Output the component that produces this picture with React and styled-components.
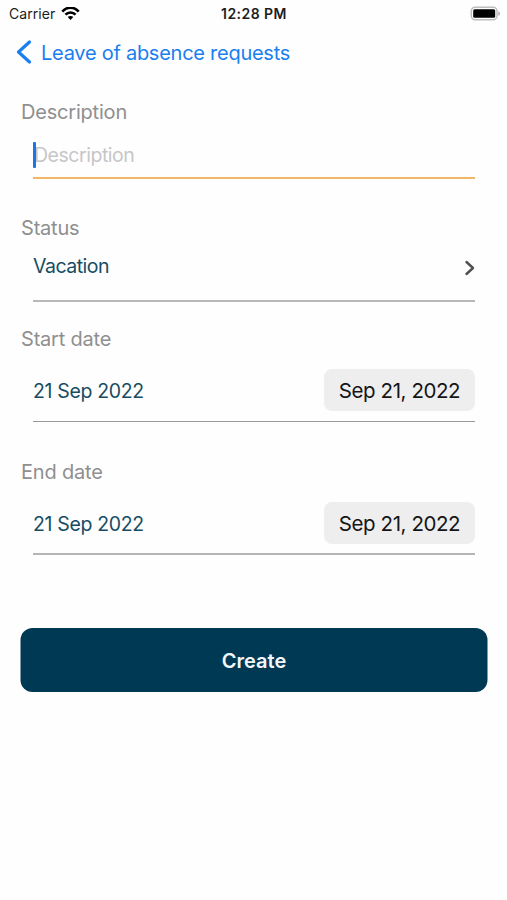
import React from "react";
import styled, { createGlobalStyle } from "styled-components";

const GlobalStyle = createGlobalStyle`
  * { box-sizing: border-box; }
  body { margin: 0; background: #fff; }
`;

const Screen = styled.main`
  width: 507px;
  height: 900px;
  display: flex;
  flex-direction: column;
  background: #fefefe;
  font-family: Inter, "Liberation Sans", sans-serif;
  font-size: 20px;
  overflow: hidden;
`;

const StatusBar = styled.header`
  height: 28px;
  display: grid;
  grid-template-columns: 1fr auto 1fr;
  align-items: center;
  padding: 0 6px 1px 9px;
  color: #1c1c1c;
`;

const Carrier = styled.div`
  display: flex;
  align-items: center;
  gap: 6px;
  font-size: 14px;
  letter-spacing: 0.05px;
`;

const Clock = styled.time`
  font-size: 14px;
  font-weight: 600;
  letter-spacing: 0.45px;
  transform: translateX(-1px);
`;

const BatterySlot = styled.div`
  display: flex;
  justify-content: flex-end;
`;

const BackLink = styled.button`
  height: 48px;
  display: flex;
  align-items: center;
  gap: 9px;
  padding: 0 0 0 16px;
  border: 0;
  background: none;
  color: #1a7fee;
  font: inherit;
  letter-spacing: -0.26px;
`;

const BackText = styled.span`
  padding-top: 1px;
`;

const Form = styled.form`
  display: flex;
  flex-direction: column;
  padding: 22px 20px 0 20px;
`;

const Field = styled.section`
  display: flex;
  flex-direction: column;
  margin-bottom: ${(p) => p.$gap}px;
`;

const Label = styled.label`
  height: 28px;
  padding-left: 1px;
  line-height: 28px;
  color: #8f8f90;
  letter-spacing: -0.2px;
`;

const Row = styled.div`
  height: ${(p) => p.$height}px;
  margin: 0 12px 0 13px;
  padding-top: ${(p) => p.$top || 0}px;
  padding-bottom: ${(p) => p.$bottom || 0}px;
  display: flex;
  align-items: center;
  justify-content: space-between;
  border-bottom: ${(p) => p.$line};
`;

const Placeholder = styled.span`
  position: relative;
  padding-left: 1px;
  color: #c6c6c8;
  font-size: 19.5px;
  letter-spacing: -0.47px;
`;

const Caret = styled.i`
  position: absolute;
  left: 0;
  top: -1px;
  width: 2.5px;
  height: 26px;
  border-radius: 1px;
  background: #1877e6;
`;

const Value = styled.span`
  padding-top: ${(p) => p.$nudge || 0}px;
  color: #174d62;
  font-size: 19.5px;
  letter-spacing: ${(p) => p.$tracking || -0.35}px;
`;

const ChevronSlot = styled.span`
  display: flex;
  padding-top: 5px;
`;

const DateChip = styled.button`
  width: 151px;
  height: 42px;
  padding: 0;
  border: 0;
  border-radius: 8px;
  background: #eeeeef;
  color: #151515;
  font: inherit;
  font-size: 20.5px;
  letter-spacing: -0.42px;
`;

const Submit = styled.button`
  height: 64px;
  width: 467px;
  padding: 1px 0 0 0;
  border: 0;
  border-radius: 12px;
  background: #003953;
  color: #f3f7f9;
  font: inherit;
  font-weight: 600;
  transform: translateX(0.5px);
`;

const WifiIcon = () => (
  <svg width="19" height="14" viewBox="0 0 19 14" fill="none" stroke="#000">
    <path d="M1.3 4.6C6-.6 13-.6 17.7 4.6" strokeWidth="2.7" />
    <path d="M4.4 7.7C7.3 4.6 11.7 4.6 14.6 7.7" strokeWidth="2.5" />
    <path d="M9.5 13 6.7 10.1C8.3 8.6 10.7 8.6 12.3 10.1Z" fill="#000" stroke="none" />
  </svg>
);

const BatteryIcon = () => (
  <svg width="31" height="15" viewBox="0 0 31 15">
    <rect x="1.3" y="1.2" width="25.7" height="12.6" rx="4" fill="#fff" stroke="#bdbdbd" strokeWidth="1.5" />
    <rect x="3.2" y="3.2" width="22" height="8.6" rx="1.5" fill="#000" />
    <path d="M28.3 5.2C30.5 6 30.5 9 28.3 9.8Z" fill="#aaa" />
  </svg>
);

const BackIcon = () => (
  <svg width="16" height="24" viewBox="0 0 16 24" fill="none" stroke="#1a7fee" strokeWidth="3.1" strokeLinecap="round" strokeLinejoin="round">
    <path d="M13.5 2 2.5 12 13.5 22" />
  </svg>
);

const ForwardIcon = () => (
  <svg width="11" height="16" viewBox="0 0 11 16" fill="none" stroke="#505050" strokeWidth="2.4" strokeLinecap="round" strokeLinejoin="round">
    <path d="M2.5 2 9 8 2.5 14" />
  </svg>
);

const DateField = ({ label, gap, top, line }) => (
  <Field $gap={gap}>
    <Label>{label}</Label>
    <Row $height={69} $top={top} $line={line}>
      <Value $nudge={1}>21 Sep 2022</Value>
      <DateChip type="button">Sep 21, 2022</DateChip>
    </Row>
  </Field>
);

export default function App() {
  return (
    <Screen>
      <GlobalStyle />
      <StatusBar>
        <Carrier>
          <span>Carrier</span>
          <WifiIcon />
        </Carrier>
        <Clock>12:28 PM</Clock>
        <BatterySlot>
          <BatteryIcon />
        </BatterySlot>
      </StatusBar>
      <BackLink type="button">
        <BackIcon />
        <BackText>Leave of absence requests</BackText>
      </BackLink>
      <Form>
        <Field $gap={35}>
          <Label>Description</Label>
          <Row $height={53} $top={7} $line="2px solid #f0b866">
            <Placeholder>
              <Caret />
              Description
            </Placeholder>
          </Row>
        </Field>
        <Field $gap={23}>
          <Label>Status</Label>
          <Row $height={60} $bottom={11} $line="2px solid #b8b8b8">
            <Value $tracking={-0.5}>Vacation</Value>
            <ChevronSlot>
              <ForwardIcon />
            </ChevronSlot>
          </Row>
        </Field>
        <DateField label="Start date" gap={36} top={6} line="1px solid #999" />
        <DateField label="End date" gap={73} top={7} line="2px solid #b5b5b5" />
        <Submit type="button">Create</Submit>
      </Form>
    </Screen>
  );
}
